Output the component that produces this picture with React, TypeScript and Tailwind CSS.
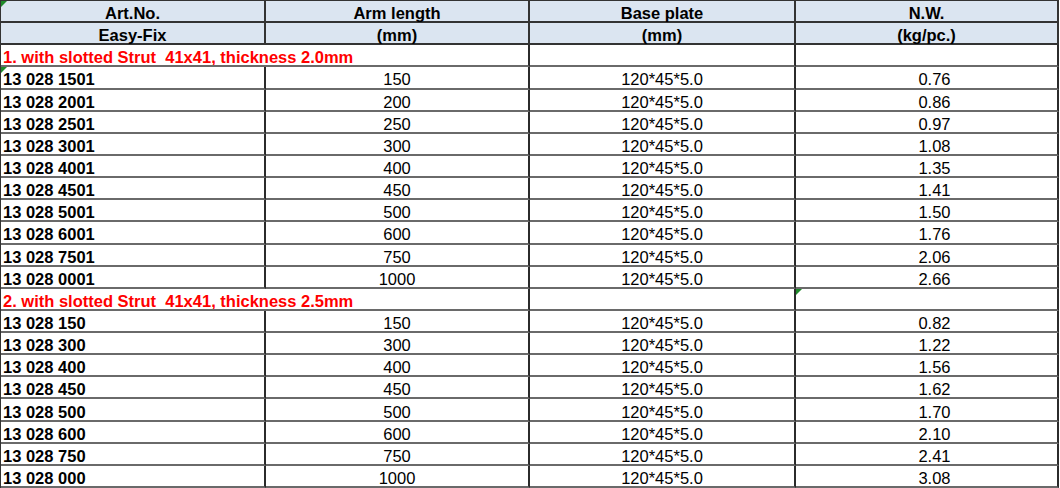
import React from 'react';

type Row = { art: string; arm: string; nw: string };

const section1: Row[] = [
  { art: '13 028 1501', arm: '150', nw: '0.76' },
  { art: '13 028 2001', arm: '200', nw: '0.86' },
  { art: '13 028 2501', arm: '250', nw: '0.97' },
  { art: '13 028 3001', arm: '300', nw: '1.08' },
  { art: '13 028 4001', arm: '400', nw: '1.35' },
  { art: '13 028 4501', arm: '450', nw: '1.41' },
  { art: '13 028 5001', arm: '500', nw: '1.50' },
  { art: '13 028 6001', arm: '600', nw: '1.76' },
  { art: '13 028 7501', arm: '750', nw: '2.06' },
  { art: '13 028 0001', arm: '1000', nw: '2.66' }
];

const section2: Row[] = [
  { art: '13 028 150', arm: '150', nw: '0.82' },
  { art: '13 028 300', arm: '300', nw: '1.22' },
  { art: '13 028 400', arm: '400', nw: '1.56' },
  { art: '13 028 450', arm: '450', nw: '1.62' },
  { art: '13 028 500', arm: '500', nw: '1.70' },
  { art: '13 028 600', arm: '600', nw: '2.10' },
  { art: '13 028 750', arm: '750', nw: '2.41' },
  { art: '13 028 000', arm: '1000', nw: '3.08' }
];

const PLATE = '120*45*5.0';

// little green "error" marker excel draws in a cell corner
function Flag() {
  return (
    <span className="absolute top-0 left-0 w-0 h-0 border-t-[6px] border-r-[6px] border-t-[#1f8a2a] border-r-transparent" />
  );
}

const cell = 'relative flex items-center pt-[4px] border-r-2 border-b-2 border-r-[#2b2b2b] border-b-[#6a6a6a] leading-[18px] whitespace-nowrap overflow-hidden';
const head = 'relative flex items-center justify-center pt-[4px] border-r-2 border-b-2 border-[#333333] bg-[#dbe5f1] font-bold leading-[18px]';

function Section({ title, flagNw }: { title: string; flagNw?: boolean }) {
  return (
    <>
      <div className={`${cell} col-span-2 pl-[2px] font-bold text-[#ff0000] whitespace-pre`}>{title}</div>
      <div className={cell} />
      <div className={cell}>{flagNw && <Flag />}</div>
    </>
  );
}

function DataRow({ row, flag }: { row: Row; flag?: boolean }) {
  return (
    <>
      <div className={`${cell} pl-[2px] font-bold`}>
        {flag && <Flag />}
        {row.art}
      </div>
      <div className={`${cell} justify-center`}>{row.arm}</div>
      <div className={`${cell} justify-center`}>{PLATE}</div>
      <div className={`${cell} justify-center pl-[16px]`}>{row.nw}</div>
    </>
  );
}

export default function App() {
  return (
    <div className="w-[1060px] h-[488px] bg-white overflow-hidden">
      <div className="grid grid-cols-[265px_264px_266px_263px] grid-rows-[repeat(22,minmax(0,1fr))] w-[1059px] h-[488px] border-l border-t border-[#333333] text-[16.5px] text-black font-['Liberation_Sans',Arial,sans-serif]">
        {/* header */}
        <div className={head}><Flag />Art.No.</div>
        <div className={head}>Arm length</div>
        <div className={head}>Base plate</div>
        <div className={head}>N.W.</div>
        <div className={head}>Easy-Fix</div>
        <div className={head}>(mm)</div>
        <div className={head}>(mm)</div>
        <div className={head}>(kg/pc.)</div>

        <Section title="1. with slotted Strut  41x41, thickness 2.0mm" />
        {section1.map((r, i) => (
          <DataRow key={r.art} row={r} flag={i === 0} />
        ))}

        <Section title="2. with slotted Strut  41x41, thickness 2.5mm" flagNw />
        {section2.map(r => (
          <DataRow key={r.art} row={r} />
        ))}
      </div>
    </div>
  );
}
